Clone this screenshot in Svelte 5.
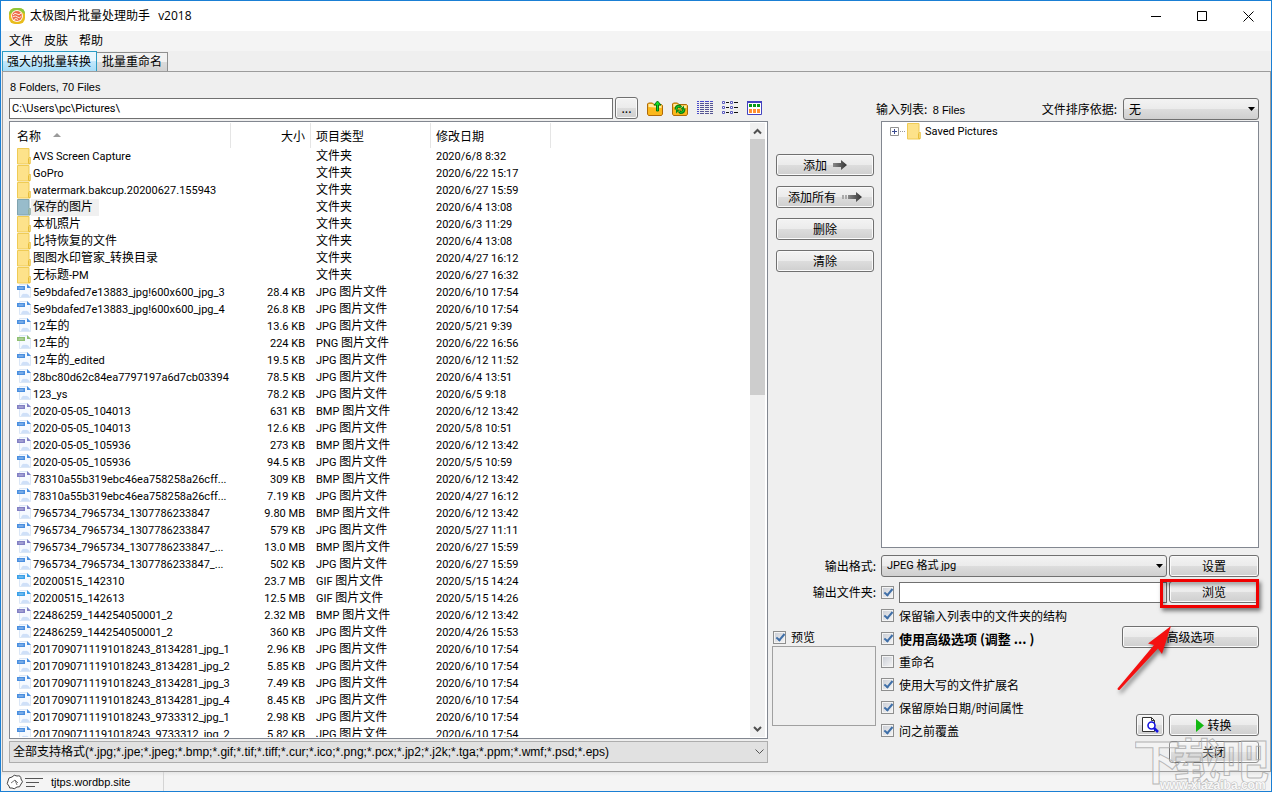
<script lang="ts">
  let path = 'C:\\Users\\pc\\Pictures\\';
  let outputFolder = '';
  let preview = true;
  let useFolder = true;

  const folders = [
    ['AVS Screen Capture', '2020/6/8 8:32'],
    ['GoPro', '2020/6/22 15:17'],
    ['watermark.bakcup.20200627.155943', '2020/6/27 15:59'],
    ['保存的图片', '2020/6/4 13:08'],
    ['本机照片', '2020/6/3 11:29'],
    ['比特恢复的文件', '2020/6/4 13:08'],
    ['图图水印管家_转换目录', '2020/4/27 16:12'],
    ['无标题-PM', '2020/6/27 16:32'],
  ];

  const files = [
    ['5e9bdafed7e13883_jpg!600x600_jpg_3', '28.4 KB', 'JPG', '2020/6/10 17:54'],
    ['5e9bdafed7e13883_jpg!600x600_jpg_4', '26.8 KB', 'JPG', '2020/6/10 17:54'],
    ['12车的', '13.6 KB', 'JPG', '2020/5/21 9:39'],
    ['12车的', '224 KB', 'PNG', '2020/6/22 16:56'],
    ['12车的_edited', '19.5 KB', 'JPG', '2020/6/12 11:52'],
    ['28bc80d62c84ea7797197a6d7cb03394', '78.5 KB', 'JPG', '2020/6/4 13:51'],
    ['123_ys', '78.2 KB', 'JPG', '2020/6/5 9:18'],
    ['2020-05-05_104013', '631 KB', 'BMP', '2020/6/12 13:42'],
    ['2020-05-05_104013', '12.6 KB', 'JPG', '2020/5/8 10:51'],
    ['2020-05-05_105936', '273 KB', 'BMP', '2020/6/12 13:42'],
    ['2020-05-05_105936', '94.5 KB', 'JPG', '2020/5/5 10:59'],
    ['78310a55b319ebc46ea758258a26cff...', '309 KB', 'BMP', '2020/6/12 13:42'],
    ['78310a55b319ebc46ea758258a26cff...', '7.19 KB', 'JPG', '2020/4/27 16:12'],
    ['7965734_7965734_1307786233847', '9.80 MB', 'BMP', '2020/6/12 13:42'],
    ['7965734_7965734_1307786233847', '579 KB', 'JPG', '2020/5/27 11:11'],
    ['7965734_7965734_1307786233847_...', '13.0 MB', 'BMP', '2020/6/27 15:59'],
    ['7965734_7965734_1307786233847_...', '502 KB', 'JPG', '2020/6/27 15:59'],
    ['20200515_142310', '23.7 MB', 'GIF', '2020/5/15 14:24'],
    ['20200515_142613', '12.5 MB', 'GIF', '2020/5/15 14:26'],
    ['22486259_144254050001_2', '2.32 MB', 'BMP', '2020/6/12 13:42'],
    ['22486259_144254050001_2', '360 KB', 'JPG', '2020/4/26 15:53'],
    ['2017090711191018243_8134281_jpg_1', '2.96 KB', 'JPG', '2020/6/10 17:54'],
    ['2017090711191018243_8134281_jpg_2', '5.85 KB', 'JPG', '2020/6/10 17:54'],
    ['2017090711191018243_8134281_jpg_3', '7.49 KB', 'JPG', '2020/6/10 17:54'],
    ['2017090711191018243_8134281_jpg_4', '8.45 KB', 'JPG', '2020/6/10 17:54'],
    ['2017090711191018243_9733312_jpg_1', '2.98 KB', 'JPG', '2020/6/10 17:54'],
    ['2017090711191018243_9733312_jpg_2', '5.82 KB', 'JPG', '2020/6/10 17:54'],
  ];

  const iconColors = { JPG: '#4a8fe0', PNG: '#8fbf72', BMP: '#8280c4', GIF: '#3aa0e8' };

  let options = [
    { label: '保留输入列表中的文件夹的结构', checked: true },
    { label: '使用高级选项 (调整 ... )', checked: true, bold: true },
    { label: '重命名', checked: false },
    { label: '使用大写的文件扩展名', checked: true },
    { label: '保留原始日期/时间属性', checked: true },
    { label: '问之前覆盖', checked: true },
  ];

  // odd parts are the Chinese runs
  const runs = (text) => text.split(/([\u4e00-\u9fff]+)/);
</script>

{#snippet mixed(text)}{#each runs(text) as part, i}{#if i % 2}<span class="zh">{part}</span>{:else}{part}{/if}{/each}{/snippet}

{#snippet folderIcon(selected)}
  <svg class="folder-icon" width="14" height="17" viewBox="0 0 14 17" aria-hidden="true">
    <path d="M.5.5h11.500v8l1 1v6.500H.5z" fill={selected ? '#98bccb' : '#fde28a'} stroke={selected ? '#7fa3ae' : '#efcb55'} />
    <path d="M11.500 15.500v-5l1-1.500 .5 .5v6z" fill={selected ? '#b3ccc0' : '#fff0a8'} stroke={selected ? '#8fae9e' : '#e8bd38'} />
  </svg>
{/snippet}

<div class="window">
  <header class="titlebar">
    <svg class="logo" width="16" height="16" viewBox="0 0 16 16" aria-hidden="true">
      <rect width="16" height="16" rx="6" fill="#e8bc1c" />
      <path d="M0 7Q0 0 7 0h3Q16 0 16 6Q8-1 0 7z" fill="#8cc63a" />
      <circle cx="8" cy="8" r="6" fill="#fff6e8" />
      <circle cx="8" cy="8" r="5" fill="#ee6a4a" />
      <path d="M4 7q2-3 4-1t4-1M3.500 9q3-2 5 0t4-1M5 11.500q2-2 4 0" fill="none" stroke="#fff0e0" />
    </svg>
    <h1>太极图片批量处理助手 <span class="version">v2018</span></h1>
    <div class="controls">
      <button aria-label="最小化"><svg width="11" height="11"><path d="M0 5.500h10" stroke="#000" /></svg></button>
      <button aria-label="最大化"><svg width="11" height="11"><path d="M.5.5h9v9h-9z" fill="none" stroke="#000" /></svg></button>
      <button aria-label="关闭窗口"><svg width="11" height="11"><path d="M.5.5l10 10M10.500.5l-10 10" stroke="#000" /></svg></button>
    </div>
  </header>

  <nav class="menu">
    <button>文件</button>
    <button>皮肤</button>
    <button>帮助</button>
  </nav>

  <div class="tabs">
    <button class="tab active">强大的批量转换</button>
    <button class="tab">批量重命名</button>
  </div>

  <main class="panel">
    <section class="browser">
      <div class="count">8 Folders, 70 Files</div>
      <div class="toolbar">
        <input class="field path" type="text" aria-label="路径" bind:value={path} />
        <button class="btn more">...</button>
        <div class="tools">
          <button aria-label="向上">
            <svg width="16" height="16" viewBox="0 0 16 16">
              <path d="M.5 14v-10l1-1h4l1.500 1.500h7.500l1 1v8.500l-1 1.500h-13z" fill="#fbb81c" stroke="#b06a08" />
              <path d="M1.500 7v-3h4l1 1.500h8V8z" fill="#ffe9a0" />
              <path d="M10.500 1l3.500 4h-2.500v6h-2V5H7z" fill="#10e020" stroke="#067010" />
            </svg>
          </button>
          <button aria-label="刷新">
            <svg width="16" height="16" viewBox="0 0 16 16">
              <path d="M.5 14v-10l1-1h4l1.500 1.500h7.500l1 1v8.500l-1 1.500h-13z" fill="#fbb81c" stroke="#b06a08" />
              <path d="M1.500 7v-3h4l1 1.500h8V8z" fill="#ffe9a0" />
              <path d="M4 9.500q0-3.500 3.500-3.500l1.500 1.500M12 8.500q0 4-3.500 4l-1.500-1.500" fill="none" stroke="#0a7a14" stroke-width="3" />
              <path d="M4 9.500q0-3.500 3.500-3.500l1.500 1.500M12 8.500q0 4-3.500 4l-1.500-1.500" fill="none" stroke="#18d828" />
              <path d="M8 9.500h4v-4zM8 9.500H4v4z" fill="#0a8a18" />
            </svg>
          </button>
          <button aria-label="详细信息">
            <svg width="16" height="16" viewBox="0 0 16 16">
              <path d="M3 1.500h13" stroke="#4a4ac8" stroke-dasharray="4 1" />
              <path d="M3 3.500h13M3 5.500h13M3 7.500h13M3 9.500h13M3 11.500h13M3 13.500h13" stroke="#555592" stroke-dasharray="4 1" />
              <path d="M0 1.500h2M0 3.500h2M0 5.500h2M0 7.500h2M0 9.500h2M0 11.500h2M0 13.500h2" stroke="#4a4ac8" />
            </svg>
          </button>
          <button aria-label="列表">
            <svg width="16" height="16" viewBox="0 0 16 16">
              <path d="M.5 1.500h2v2h-2zM8.500 1.500h2v2h-2zM.5 6.500h2v2h-2zM8.500 6.500h2v2h-2zM.5 11.500h2v2h-2zM8.500 11.500h2v2h-2z" fill="#fff" stroke="#5a5ac0" />
              <path d="M4 2.500h3M12 2.500h4M4 7.500h3M12 7.500h4M4 12.500h3M12 12.500h4" stroke="#111" />
            </svg>
          </button>
          <button aria-label="缩略图">
            <svg width="16" height="16" viewBox="0 0 16 16">
              <path d="M.5 1.500h14v13H.5z" fill="#fff" stroke="#4343c0" />
              <path d="M0 1h15v2H0z" fill="#4343c0" />
              <path d="M2 4h3v3H2zM6 4h3v3H6zM10 4h3v3h-3z" fill="#089818" />
              <path d="M2 9h3v4H2zM6 9h3v4H6zM10 9h3v4h-3z" fill="#ff9030" />
            </svg>
          </button>
        </div>
      </div>

      <div class="list">
        <div class="rows">
          <table>
            <thead>
              <tr>
                <th class="name">名称 <span class="sort"></span></th>
                <th class="size">大小</th>
                <th class="type">项目类型</th>
                <th class="date">修改日期</th>
              </tr>
            </thead>
            <tbody>
              {#each folders as [name, date], i}
                <tr>
                  <td class="name"><div class="cell">{@render folderIcon(i === 3)}<span class="label" class:selected={i === 3}>{@render mixed(name)}</span></div></td>
                  <td class="size"></td>
                  <td class="type"><div class="cell"><span class="text"><span class="zh">文件夹</span></span></div></td>
                  <td>{date}</td>
                </tr>
              {/each}
              {#each files as [name, size, ext, date]}
                <tr>
                  <td class="name">
                    <div class="cell">
                      <svg class="file-icon" width="14" height="15" viewBox="0 0 14 15" aria-hidden="true">
                        <path d="M2.500.5h8l3 3v10h-11z" fill="#f6faff" stroke="#dbe7f6" />
                        <path d="M10 0l4 4h-4z" fill={iconColors[ext]} />
                        <path d="M4 13q1-4 4-3 3-1 5 3z" fill="#cfe0f8" />
                        <path d="M0 2h8v4H0z" fill={iconColors[ext]} />
                        <path d="M1.500 4h5" stroke="#fff" opacity=".5" />
                      </svg>
                      <span class="label">{@render mixed(name)}</span>
                    </div>
                  </td>
                  <td class="size">{size}</td>
                  <td class="type"><div class="cell"><span class="text">{ext} <span class="zh">图片文件</span></span></div></td>
                  <td>{date}</td>
                </tr>
              {/each}
            </tbody>
          </table>
        </div>
        <div class="scrollbar" aria-hidden="true">
          <svg width="15" height="16"><path d="M4 10.500l3.500-3.500 3.500 3.500" fill="none" stroke="#505050" stroke-width="2" /></svg>
          <div class="track"><div class="thumb"></div></div>
          <svg width="15" height="16"><path d="M4 6l3.500 3.500L11 6" fill="none" stroke="#505050" stroke-width="2" /></svg>
        </div>
      </div>

      <div class="select flat">
        <select aria-label="文件类型">
          <option>全部支持格式(*.jpg;*.jpe;*.jpeg;*.bmp;*.gif;*.tif;*.tiff;*.cur;*.ico;*.png;*.pcx;*.jp2;*.j2k;*.tga;*.ppm;*.wmf;*.psd;*.eps)</option>
        </select>
        <svg width="9" height="6" aria-hidden="true"><path d="M.5.5l4 4 4-4" fill="none" stroke="#555" /></svg>
      </div>
    </section>

    <section class="middle">
      <div class="actions">
        <button class="btn">添加
          <svg width="14" height="10" aria-hidden="true">
            <linearGradient id="fade"><stop stop-color="#888" /><stop offset="1" stop-color="#333" /></linearGradient>
            <path d="M0 3h8V0l6 5-6 5V7H0z" fill="url(#fade)" />
          </svg>
        </button>
        <button class="btn">添加所有
          <svg width="20" height="10" aria-hidden="true">
            <path d="M0 3h2v4H0zM3 3h2v4H3z" fill="#aaa" />
            <path d="M6 3h8V0l6 5-6 5V7H6z" fill="url(#fade)" />
          </svg>
        </button>
        <button class="btn">删除</button>
        <button class="btn">清除</button>
      </div>
      <label class="row-label" for="format">输出格式:</label>
      <label class="row-label" for="folder">输出文件夹:</label>
      <label class="check preview-check"><input type="checkbox" bind:checked={preview} />预览</label>
      <div class="preview"></div>
    </section>

    <section class="output">
      <div class="output-head">
        <span>输入列表:&nbsp; <span class="latin">8 Files</span></span>
        <label for="sort">文件排序依据:</label>
        <div class="select sort-by">
          <select id="sort"><option>无</option></select>
          <svg width="7" height="4" aria-hidden="true"><path d="M0 0h7L3.500 4z" /></svg>
        </div>
      </div>

      <div class="output-body">
        <div class="tree">
          <div class="node">
            <svg width="16" height="9" aria-hidden="true">
              <path d="M.5.5h8v8h-8z" fill="#fff" stroke="#919191" />
              <path d="M2 4.500h5M4.500 2v5" stroke="#3a4a90" />
              <path d="M10 4.500h6" stroke="#999" stroke-dasharray="1 1" />
            </svg>
            {@render folderIcon(false)}
            <span class="node-label">Saved Pictures</span>
          </div>
        </div>

        <div class="row">
          <div class="select grow">
            <select id="format"><option>JPEG 格式 jpg</option></select>
            <svg width="7" height="4" aria-hidden="true"><path d="M0 0h7L3.500 4z" /></svg>
          </div>
          <button class="btn side">设置</button>
        </div>

        <div class="row">
          <label class="check"><input type="checkbox" aria-label="使用输出文件夹" bind:checked={useFolder} /></label>
          <input id="folder" class="field grow" type="text" bind:value={outputFolder} />
          <div class="browse">
            <button class="btn side">浏览</button>
            <div class="highlight"></div>
          </div>
        </div>

        <div class="bottom">
          <div class="options">
            {#each options as option}
              <label class="check" class:bold={option.bold}>
                <input type="checkbox" bind:checked={option.checked} />{option.label}
              </label>
            {/each}
          </div>
          <div class="run">
            <button class="btn advanced">高级选项</button>
            <div class="convert">
              <button class="btn icon-btn" aria-label="预览">
                <svg width="18" height="18" viewBox="0 0 18 18">
                  <path d="M1.500 1.500h9l3 3v11h-12z" fill="#fff" stroke="#333" />
                  <path d="M10.500 1.500v3h3" fill="none" stroke="#333" />
                  <circle cx="10.500" cy="9.500" r="3.500" fill="#fff" stroke="#1414e0" stroke-width="1.600" />
                  <path d="M13 12l4 4" stroke="#1414e0" stroke-width="2.500" />
                </svg>
              </button>
              <button class="btn side"><svg width="8" height="13" aria-hidden="true"><path d="M0 0l8 6.500L0 13z" fill="#12b812" /></svg>转换</button>
            </div>
            <button class="btn side">关闭</button>
            <svg class="arrow" width="70" height="80" viewBox="0 0 70 80" aria-hidden="true">
              <path d="M7.500 67.500L44 24l-6-1.500L61 5 52 33l-4-5.500L9.500 69q-2 .5-2-1.500z" fill="#f41010" />
            </svg>
          </div>
        </div>
      </div>
    </section>
  </main>

  <footer class="status">
    <div class="status-cell">
      <svg width="38" height="16" viewBox="0 0 38 16" aria-hidden="true">
        <path d="M3 12q-3-2-1-5 0-4 4-4 2-3 5-1 4-1 4 3 3 3 0 5-1 4-4 3-3 3-5 1-3 1-3-2z" fill="#fff" stroke="#444" />
        <path d="M5 9l4-3 3 3M9 6l2 5" fill="none" stroke="#777" />
        <path d="M19 4.500h18M20 8.500h13M20 12.500h9" stroke="#555" />
      </svg>
      <a href="#site">tjtps.wordbp.site</a>
    </div>
  </footer>

  <svg class="watermark" width="136" height="56" viewBox="0 0 136 56" aria-hidden="true">
    <g fill="#fff" fill-opacity=".25" stroke="#a8a8a8" stroke-opacity=".8">
      <text class="mark" x="-2" y="44">下</text>
      <text class="mark" x="38" y="44">载</text>
      <text class="mark" x="86" y="44">吧</text>
    </g>
    <text class="url" x="25" y="54">www.xiazaiba.com</text>
  </svg>
</div>

<style>
  :global(body) {
    margin: 0;
    overflow: hidden;
  }

  .window {
    position: relative;
    display: flex;
    flex-direction: column;
    height: 100vh;
    min-height: 640px;
    box-sizing: border-box;
    border: 1px solid #1a7fd4;
    background: #efefef;
    color: #000;
    font: 12px/16px "Noto Sans CJK SC", sans-serif;
  }

  button,
  select,
  input {
    font: inherit;
    color: inherit;
    box-sizing: border-box;
    margin: 0;
  }

  svg {
    display: block;
    flex: none;
  }

  /* title bar and menu */
  .titlebar {
    display: flex;
    align-items: center;
    height: 30px;
    padding-left: 8px;
    background: #fff;
  }

  .titlebar h1 {
    flex: 1;
    margin: 0 0 0 5px;
    font: 12px/16px "Open Sans", "Noto Sans CJK SC", sans-serif;
  }

  .version {
    margin-left: 5px;
  }

  .controls {
    display: flex;
  }

  .controls button {
    display: flex;
    align-items: center;
    justify-content: center;
    width: 46px;
    height: 30px;
    padding: 0;
    border: none;
    background: none;
  }

  .menu {
    display: flex;
    gap: 11px;
    height: 20px;
    padding-left: 8px;
    background: #f4f4f4;
  }

  .menu button {
    padding: 0 0 2px;
    border: none;
    background: none;
  }

  .tabs {
    display: flex;
    align-items: flex-end;
    height: 20px;
    padding-left: 1px;
  }

  .tab {
    height: 19px;
    padding: 0 5px 2px;
    border: 1px solid #8f8f8f;
    border-left: none;
    border-bottom: none;
    background: linear-gradient(#f2f2f2 50%, #dcdcdc 50%, #d2d2d2);
    line-height: 16px;
    white-space: nowrap;
  }

  .tab.active {
    height: 20px;
    padding-left: 4px;
    border: 1px solid #2c9cc4;
    border-bottom: none;
    background: linear-gradient(#e8f6fd 45%, #c2e7fb 50%, #a6dcf7);
  }

  .panel {
    flex: 1;
    min-height: 0;
    display: grid;
    grid-template-columns: minmax(0, 1fr) 104px 383px;
    margin-left: 1px;
    padding: 8px 11px 8px 6px;
    border: 1px solid #9c9c9c;
  }

  /* shared controls */
  .btn {
    display: flex;
    align-items: center;
    justify-content: center;
    gap: 6px;
    height: 22px;
    padding: 0;
    border: 1px solid #707070;
    border-radius: 3px;
    background: linear-gradient(#f3f3f3, #ebebeb 50%, #dddddd 50%, #cfcfcf);
    box-shadow: inset 0 0 0 1px #fafafa;
    line-height: 18px;
  }

  .field {
    height: 21px;
    min-width: 0;
    padding: 0 2px;
    border: 1px solid #707070;
    background: #fff;
    font: 11px/17px Roboto, "Noto Sans CJK SC", sans-serif;
  }

  .select {
    position: relative;
    display: flex;
  }

  .select select {
    width: 100%;
    height: 22px;
    padding: 0 20px 0 5px;
    appearance: none;
    border: 1px solid #707070;
    border-radius: 3px;
    background: linear-gradient(#f3f3f3, #ebebeb 50%, #dddddd 50%, #cfcfcf);
    font: 12px/18px "Noto Sans CJK SC", sans-serif;
  }

  .select #format {
    font-family: Roboto, "Noto Sans CJK SC", sans-serif;
    font-size: 11px;
  }

  .select svg {
    position: absolute;
    right: 4px;
    top: 9px;
    pointer-events: none;
  }

  .select.flat select {
    padding-left: 3px;
    border-color: #adadad;
    border-radius: 0;
    background: #e1e1e1;
    font-family: "Liberation Sans", "Noto Sans CJK SC", sans-serif;
  }

  .select.flat svg {
    top: 8px;
  }

  .check {
    display: flex;
    align-items: center;
    gap: 5px;
    white-space: nowrap;
  }

  .check input {
    appearance: none;
    flex: none;
    width: 13px;
    height: 13px;
    border: 1px solid #8e8f8f;
    background: linear-gradient(135deg, #c8ccd4, #f6f6f6);
    box-shadow: inset 0 0 0 1px #f4f4f4;
  }

  .check input:checked::before {
    content: "";
    display: block;
    box-sizing: border-box;
    width: 5px;
    height: 9px;
    margin-left: 4px;
    border: solid #3f6fa8;
    border-width: 0 2px 2px 0;
    transform: rotate(40deg);
  }

  .grow {
    flex: 1;
  }

  .zh {
    font-family: "Noto Sans CJK SC", sans-serif;
    font-size: 12px;
    line-height: 12px;
  }

  /* file browser */
  .browser {
    display: flex;
    flex-direction: column;
    min-width: 0;
    padding-right: 4px;
  }

  .count,
  .latin,
  .status {
    font-family: "Liberation Sans", sans-serif;
    font-size: 11px;
  }

  .count {
    padding-left: 1px;
    line-height: 15px;
  }

  .toolbar {
    display: flex;
    align-items: center;
    margin: 2px 0;
  }

  .path {
    flex: 1;
  }

  .more {
    width: 23px;
    margin-left: 2px;
  }

  .tools {
    display: flex;
    gap: 9px;
    padding: 0 5px 0 9px;
  }

  .tools button {
    width: 16px;
    height: 16px;
    padding: 0;
    border: none;
    background: none;
  }

  .list {
    flex: 1 1 0;
    min-height: 0;
    display: flex;
    margin-bottom: 2px;
    padding: 1px 2px 1px 0;
    border: 1px solid #828790;
    background: #fff;
  }

  .rows {
    flex: 1;
    overflow: hidden;
    font: 11px/17px Roboto, "Noto Sans CJK SC", sans-serif;
  }

  table {
    width: 541px;
    table-layout: fixed;
    border-collapse: separate;
    border-spacing: 0;
  }

  th {
    height: 25px;
    padding: 0 5px;
    box-sizing: border-box;
    border-right: 1px solid #e5e5e5;
    font: 12px/16px "Noto Sans CJK SC", sans-serif;
    text-align: left;
  }

  th.name { width: 221px; }
  th.size { width: 80px; }
  th.type,
  th.date { width: 120px; }

  td {
    height: 17px;
    padding: 0 6px 0 5px;
    white-space: nowrap;
  }

  th.name,
  td.name {
    padding-left: 7px;
  }

  th.size,
  td.size {
    text-align: right;
  }

  .sort {
    display: inline-block;
    margin: 0 0 4px 9px;
    border: solid transparent;
    border-width: 0 4px 4px;
    border-bottom-color: #9a9a9a;
  }

  .cell {
    display: flex;
    height: 17px;
  }

  .label {
    padding: 0 6px 0 2px;
  }

  .label.selected {
    background: #f0f0f0;
  }

  .scrollbar {
    display: flex;
    flex-direction: column;
    background: #f0f0f0;
  }

  .track {
    flex: 1;
    min-height: 0;
  }

  .thumb {
    height: 44%;
    background: #cdcdcd;
  }

  /* middle column */
  .middle {
    display: flex;
    flex-direction: column;
  }

  .actions {
    flex: 1;
    display: flex;
    flex-direction: column;
    gap: 10px;
    padding: 74px 2px 0 4px;
  }

  .row-label {
    height: 22px;
    margin-bottom: 4px;
    line-height: 20px;
    text-align: right;
  }

  .preview-check {
    height: 18px;
    margin-top: 20px;
    padding-left: 1px;
  }

  .preview {
    height: 80px;
    margin-bottom: 37px;
    box-sizing: border-box;
    border: 1px solid #a0a0a0;
  }

  /* output column */
  .output {
    display: flex;
    flex-direction: column;
  }

  .output-head {
    display: flex;
    align-items: center;
    padding-top: 18px;
  }

  .output-head label {
    margin-left: auto;
  }

  .sort-by {
    width: 136px;
    margin-left: 6px;
  }

  .output-body {
    flex: 1;
    display: flex;
    flex-direction: column;
    padding: 1px 0 0 5px;
  }

  .tree {
    flex: 1;
    margin-bottom: 7px;
    padding: 1px 8px;
    border: 1px solid #828790;
    background: #fff;
  }

  .node {
    display: flex;
    align-items: center;
    height: 17px;
    font: 11px/17px Roboto, sans-serif;
  }

  .node-label {
    margin-left: 4px;
  }

  .node .folder-icon {
    margin-left: 1px;
  }

  .row {
    display: flex;
    align-items: center;
    gap: 2px;
    height: 22px;
    margin-bottom: 4px;
  }

  .row .check {
    margin-right: 3px;
  }

  .side {
    width: 90px;
  }

  .browse {
    position: relative;
  }

  .highlight {
    position: absolute;
    inset: -2px 0 -5px -9px;
    border: 3px solid #f00000;
    box-shadow: 2px 3px 4px rgba(0, 0, 0, 0.5), inset 2px 3px 4px rgba(0, 0, 0, 0.35);
    pointer-events: none;
  }

  .bottom {
    display: flex;
    justify-content: space-between;
    height: 159px;
    margin-top: -3px;
  }

  .options .check {
    height: 23px;
  }

  .bold {
    font-size: 13px;
    font-weight: bold;
  }

  .run {
    position: relative;
    display: flex;
    flex-direction: column;
    align-items: flex-end;
    padding-top: 22px;
  }

  .advanced {
    width: 137px;
    margin-bottom: 66px;
  }

  .convert {
    display: flex;
    gap: 5px;
    margin-bottom: 5px;
  }

  .convert .side {
    gap: 3px;
  }

  .icon-btn {
    width: 28px;
  }

  .arrow {
    position: absolute;
    left: -12px;
    top: 17px;
    filter: drop-shadow(2px 3px 2px rgba(0, 0, 0, 0.5));
    pointer-events: none;
  }

  /* status bar */
  .status {
    height: 19px;
    background: linear-gradient(#e6e6e6, #f4f4f4 4px);
  }

  .status-cell {
    display: flex;
    align-items: center;
    gap: 7px;
    width: 157px;
    height: 19px;
    padding-left: 5px;
    border-right: 1px solid #d4d4d4;
  }

  .status a {
    color: inherit;
    text-decoration: none;
  }

  .watermark {
    position: absolute;
    right: 0;
    bottom: 0;
    pointer-events: none;
  }

  .mark {
    font: bold 48px "Noto Sans CJK SC", sans-serif;
  }

  .url {
    font: bold 12px "Liberation Sans", sans-serif;
    fill: #f8f8f8;
    stroke: #bdbdbd;
    paint-order: stroke;
  }
</style>
